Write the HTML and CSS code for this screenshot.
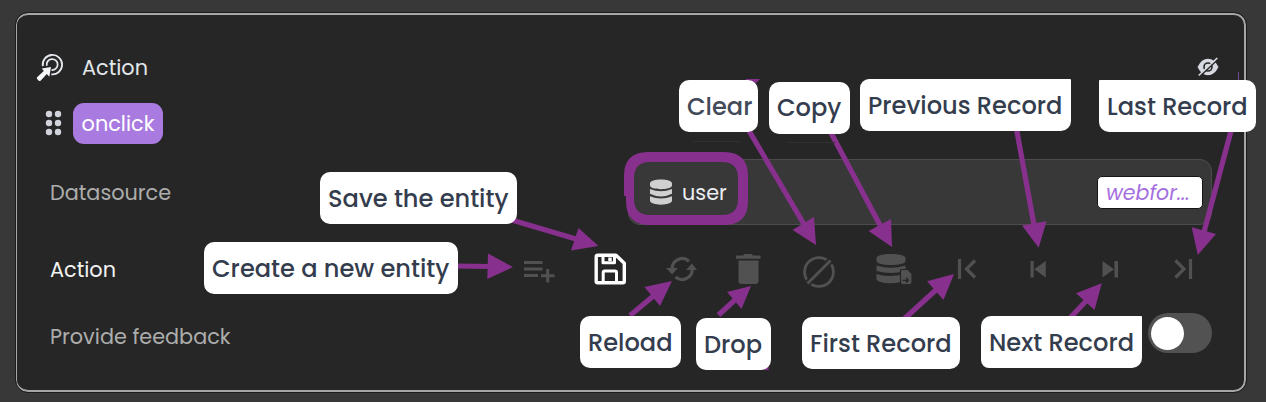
FILE: index.html
```html
<!DOCTYPE html>
<html lang="en">
<head>
<meta charset="utf-8">
<title>Action settings</title>
<link rel="stylesheet" href="styles.css">
</head>
<body>
<main class="panel">
  <header class="header">
    <svg class="click-icon" width="28" height="28" viewBox="0 0 28 28">
      <g fill="none" stroke="#e4e7ec" stroke-width="1.800">
        <path d="M6.800 12.200A9.700 9.700 0 1 1 15.300 20.300"/>
        <path d="M10.800 11.800A5.500 5.500 0 1 1 15.500 16"/>
      </g>
      <path d="M5.800 14.600 15 13l-1.700 9.700-2.500-2.600-6 6.300q-1.200 1-2.300 0l-1.400-1.500q-.8-1 .2-2l6.500-6z" fill="#f4f6fa"/>
    </svg>
    <span class="title">Action</span>
    <svg class="hidden-icon" width="22" height="20" viewBox="0 0 22 20">
      <path d="M.5 10Q4.500 1.800 11 1.800T21.500 10Q17.500 18.200 11 18.200T.5 10z" fill="#d6d9df"/>
      <circle cx="11" cy="10" r="4" fill="none" stroke="#262626" stroke-width="1.600"/>
      <path d="M2.800 19.300 21.300 2" stroke="#262626" stroke-width="1.600"/>
      <path d="M1.700 18.500 20.300 1" stroke="#d6d9df" stroke-width="1.700"/>
    </svg>
  </header>

  <div class="event">
    <svg class="grip" width="18" height="26" viewBox="0 0 18 26" fill="#d1d5db">
      <circle cx="4" cy="4" r="3.200"/><circle cx="13" cy="4" r="3.200"/>
      <circle cx="4" cy="13" r="3.200"/><circle cx="13" cy="13" r="3.200"/>
      <circle cx="4" cy="22" r="3.200"/><circle cx="13" cy="22" r="3.200"/>
    </svg>
    <span class="chip">onclick</span>
  </div>

  <div class="row row-source">
    <span class="name name-source">Datasource</span>
    <div class="field">
      <svg class="db-icon" width="22" height="26" viewBox="0 0 22 26" fill="#d0d0d0">
        <path d="M0 4.500C0-.8 22-.8 22 4.500v1.800C22 11.500 0 11.500 0 6.300zM0 10q11 4.500 22 0v4.700q-11 5.500-22 0zM0 17.300q11 4.500 22 0v4.200c0 5.500-22 5.500-22 0z"/>
      </svg>
      <span class="entity">user</span>
      <span class="tag">webfor...</span>
    </div>
  </div>

  <div class="row row-action">
    <span class="name name-action">Action</span>
    <div class="tools">
      <svg width="32" height="32" viewBox="0 0 32 32" fill="none" stroke="#515151" stroke-width="3"><path d="M1 9.500H19.500M1 16H19.500M1 22.500H15M18 22.800H31.500M24.700 16V29.500"/></svg>
      <svg width="32" height="32" viewBox="0 0 32 32" fill="none" stroke="#fff" stroke-width="3.400" stroke-linejoin="round"><path d="M3.700 2.200H22L30.300 10.200V28.300Q30.300 29.800 28.800 29.800H3.700Q2.200 29.800 2.200 28.300V3.700Q2.200 2.200 3.700 2.200z"/><path d="M9 2.500V9.800H20.500V2.500M9.200 29V19.500Q9.200 18 10.700 18H21Q22.500 18 22.500 19.500V29" stroke-width="3"/><path d="M16 4.500V8" stroke-width="3.500"/></svg>
      <svg class="reload-icon" width="32" height="32" viewBox="0 0 32 32" fill="none" stroke="#515151" stroke-width="3.200"><path d="M7 15.500A10.200 10.200 0 0 1 24 8.200M27.300 16.500A10.200 10.200 0 0 1 10.500 24"/><path d="M1 15H13L7 21.500zM21 17H32L27 10.500z" fill="#515151" stroke="none"/></svg>
      <svg class="trash-icon" width="32" height="32" viewBox="0 0 32 32" fill="#515151"><path d="M4 2.500H11L12.500 1H19.500L21 2.500H28.500V5.800H4zM6.500 7.500H26.500V28Q26.500 31 23.500 31H9.500Q6.500 31 6.500 28z"/></svg>
      <svg class="empty-icon" width="34" height="34" viewBox="0 0 34 34" fill="none" stroke="#515151" stroke-width="2.800"><circle cx="17" cy="20" r="14.400"/><path d="M3 34 31 6" stroke="#262626" stroke-width="6.500"/><path d="M5.500 31.500 28.500 8.500"/></svg>
      <svg class="copy-icon" width="36" height="32" viewBox="0 0 36 32" fill="#515151"><path d="M.5 5C.5-.3 29.500-.3 29.500 5V8C29.500 13.300.5 13.300.5 8zM.5 12.500Q15 17 29.500 12.500V18Q15 22 .5 18zM.5 21Q12 25 29.500 21V26C27 31.500 3 31.500.5 26.500z"/><path d="M25.500 16.500H32L36 20.500V29.500Q36 31.500 34 31.500H26.500Q24.500 31.500 24.500 29.500V17.500Q24.500 16.500 25.500 16.500z" stroke="#262626" stroke-width="1.200"/><path d="M26.500 27.300H32.500M30 24.800 32.500 27.300 30 29.800" stroke="#262626" stroke-width="1.300" fill="none"/></svg>
      <svg class="first-icon" width="22" height="24" viewBox="0 0 22 24" fill="none" stroke="#515151" stroke-width="3.200"><path d="M4.500 2V22M20 3.500 11.500 12 20 20.500"/></svg>
      <svg class="prev-icon" width="18" height="20" viewBox="0 0 18 20" fill="#515151"><path d="M1.500 2H4.700V18.500H1.500zM16.800 2V18.500L5.200 10.200z"/></svg>
      <svg class="next-icon" width="18" height="20" viewBox="0 0 18 20" fill="#515151"><path d="M13.500 2H17V18.500H13.500zM1.500 2V18.500L13 10.200z"/></svg>
      <svg class="last-icon" width="22" height="24" viewBox="0 0 22 24" fill="none" stroke="#515151" stroke-width="3.200"><path d="M18.500 2V22M3.500 3.500 12 12 3.500 20.500"/></svg>
    </div>
  </div>

  <div class="row row-feedback">
    <span class="name name-feedback">Provide feedback</span>
    <span class="toggle"><span class="knob"></span></span>
  </div>
</main>

<svg class="marks" width="1266" height="402" viewBox="0 0 1266 402">
  <path fill="#88308e" fill-rule="evenodd" d="M648 152H724Q748 152 748 176V201Q748 225 724 225H650Q626 225 626 201V196H624V176Q624 152 648 152zM650 162Q634 162 634 178V199Q634 215 650 215H722Q738 215 738 199V178Q738 162 722 162z"/>
  <g stroke="#88308e" stroke-width="5.200">
    <path d="M510 219.500 576 239"/><path d="M456 266 490 266.500"/><path d="M748 129 805 226"/>
    <path d="M830 131 881 227"/><path d="M1016.500 129 1034 225"/><path d="M1231.500 129 1204 232"/>
    <path d="M630 315.500 654 295.500"/><path d="M718.500 315 736 299"/><path d="M903 320 937 289"/><path d="M1070 318 1087 300"/>
  </g>
  <g fill="#88308e">
    <path d="M578.500 228 571 250.500 598.500 246zM488 253.500 487.300 279 513 267zM814 217 792.500 230 816 245zM891 219 868.500 231 892 247z"/>
    <path d="M1022 225.500 1046.500 221.200 1038.700 247.700zM1191.700 227.300 1216 234 1197.800 255zM644.500 287 660 306 672 281zM727 292 741.500 309 751 286zM927 281.300 943.500 300 954 274zM1076 293.300 1094.500 310 1101.800 283.200z"/>
    <path d="M746 79H760L756 83H746zM764 366H768.500V370H764z"/>
  </g>
  <path d="M1238.500 72V82" stroke="#6d4a91" stroke-width="1"/>
  <path d="M693 141.500H740M787 142.500H835" stroke="#303030" stroke-width="1"/>
</svg>

<div class="callout save">Save the entity</div>
<div class="callout create">Create a new entity</div>
<div class="callout clear">Clear</div>
<div class="callout copy">Copy</div>
<div class="callout previous">Previous Record</div>
<div class="callout last">Last Record</div>
<div class="callout reload">Reload</div>
<div class="callout drop">Drop</div>
<div class="callout first">First Record</div>
<div class="callout next">Next Record</div>
</body>
</html>
```
FILE: styles.css
```css
* { box-sizing: border-box; }
body {
  margin: 0;
  width: 1266px;
  height: 402px;
  padding: 13px 20px 10px 16px;
  overflow: hidden;
  background: #383838;
  font-family: Poppins, Inter, "Open Sans", sans-serif;
  font-size: 20.8px;
  line-height: 30px;
  white-space: nowrap;
}
svg { display: block; flex: none; overflow: visible; }
.panel {
  height: 379px;
  padding: 33px 32px 0 33px;
  border: solid #a6a6a6;
  border-width: 2px 2px 2px 1px;
  border-radius: 12px;
  background: #262626;
  outline: 1px solid #1c1c1c;
}
.header { display: flex; align-items: center; height: 40px; margin: 0 -7px 0 -14px; }
.title { margin-left: 18px; color: #e2e5ea; }
.hidden-icon { margin: -3px 0 0 auto; }
.event { display: flex; align-items: center; height: 41px; margin: 15px 0 0 -5px; }
.grip { margin-top: -1px; }
.chip {
  width: 90px; height: 41px; margin-left: 10px;
  border-radius: 11px; background: #a97be0; color: #fff;
  line-height: 42px; text-align: center;
}
.row { display: flex; align-items: center; justify-content: space-between; }
.name { padding-top: 2px; color: #adadad; }
.row-source { height: 66px; margin-top: 15px; }
.field {
  display: flex; align-items: center; width: 584px; height: 66px;
  padding: 0 8px 0 21px; border: 1px solid #4c4c4c; border-radius: 12px; background: #383838;
}
.entity { margin-left: 10px; padding-top: 1px; color: #eceef3; }
.tag {
  width: 106px; height: 33px; margin-left: auto; padding-left: 8px;
  border: 1px solid #161616; border-radius: 5px; background: #fff;
  color: #a56fe0; font-size: 20.500px; font-style: italic; line-height: 31px;
}
.row-action { height: 60px; margin-top: 14px; }
.row .name-action { color: #f2f2f2; }
.tools { display: flex; align-items: center; gap: 39px; margin-right: 18px; }
.trash-icon { margin-left: -4px; }
.empty-icon { margin-left: -1px; }
.copy-icon { margin-left: 1px; }
.first-icon { margin-left: 4px; }
.prev-icon { margin-left: 13px; }
.next-icon { margin-left: 15px; }
.last-icon { margin-left: 14px; }
.row-feedback { height: 42px; margin-top: 16px; }
.toggle { display: flex; align-items: center; width: 64px; height: 40px; padding-left: 3px; border-radius: 20px; background: #525252; margin-top: -6px; }
.knob { width: 33px; height: 33px; border-radius: 50%; background: #fff; }

.marks { position: absolute; left: 0; top: 0; }
.callout {
  position: absolute; height: 52px; padding-left: 8px;
  border-radius: 10px; background: #fff; color: #343d4e;
  font-size: 24.100px; font-weight: 500; line-height: 53px;
}
.save { left: 320px; top: 172px; width: 197px; }
.create { left: 204px; top: 242px; width: 254px; }
.clear { left: 679px; top: 80px; width: 79px; color: #424a5a; }
.copy { left: 769px; top: 82px; width: 81px; line-height: 52px; }
.previous { left: 860px; top: 79px; width: 211px; border-radius: 9px 1px 10px 9px; }
.last { left: 1099px; top: 80px; width: 157px; border-radius: 1px 10px 10px 10px; }
.reload { left: 580px; top: 316px; width: 101px; }
.drop { left: 696px; top: 318px; width: 75px; }
.first { left: 802px; top: 317px; width: 158px; }
.next { left: 981px; top: 316px; width: 161px; border-radius: 10px 1px 10px 8px; }
```
